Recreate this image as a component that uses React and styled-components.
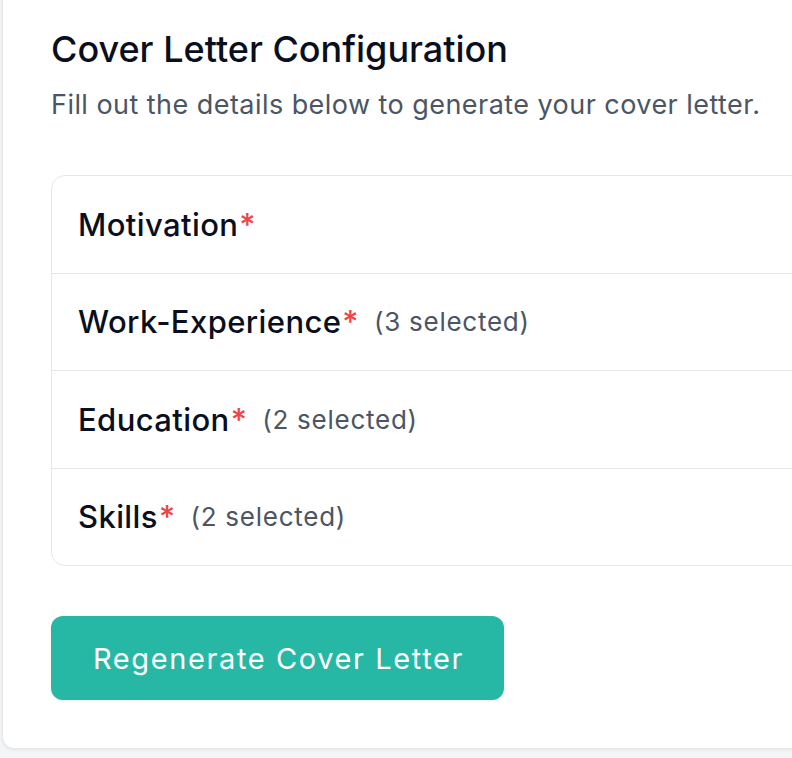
import styled, { createGlobalStyle } from "styled-components";

const GlobalStyle = createGlobalStyle`
  html, body {
    margin: 0;
    padding: 0;
    background: #f4f5f7;
    font-family: Inter, "Noto Sans", "Liberation Sans", sans-serif;
  }
`;

const Page = styled.div`
  width: 792px;
  height: 758px;
  overflow: hidden;
  padding-left: 2px;
  box-sizing: border-box;
`;

const Card = styled.section`
  margin-top: -20px;
  width: 900px;
  box-sizing: border-box;
  background: #ffffff;
  border: 1.5px solid #e5e7eb;
  border-radius: 12px;
  box-shadow: 0 1px 3px rgba(0, 0, 0, 0.07);
  padding: 48px 48px 48px 48px;
`;

const Title = styled.h2`
  margin: 0;
  font-size: 36px;
  line-height: 40px;
  font-weight: 500;
  letter-spacing: 0;
  color: #0a0f1e;
`;

const Subtitle = styled.p`
  margin: 20px 0 0;
  font-size: 27px;
  line-height: 32px;
  letter-spacing: 0.45px;
  color: #4b5563;
`;

const List = styled.div`
  margin-top: 54px;
  border: 1.5px solid #e5e7eb;
  border-radius: 14px;
  overflow: hidden;
`;

const Row = styled.div`
  display: flex;
  align-items: center;
  height: 96.5px;
  padding: 0 26px;
  & + & {
    border-top: 1.5px solid #e5e7eb;
  }
`;

const Label = styled.span`
  font-size: 31px;
  font-weight: 500;
  letter-spacing: 0.4px;
  color: #0a0f1e;
`;

const Star = styled.span`
  margin-left: 1px;
  color: #ef4444;
`;

const Count = styled.span`
  margin-left: 15px;
  font-size: 26px;
  letter-spacing: 0.75px;
  color: #4b5563;
`;

const Button = styled.button`
  margin-top: 50px;
  height: 84px;
  padding: 0 40px 0 42px;
  border: none;
  border-radius: 12px;
  background: #26b8a5;
  color: #ffffff;
  font-family: inherit;
  font-size: 29px;
  font-weight: 400;
  letter-spacing: 1.6px;
  box-shadow: 0 1px 3px rgba(0, 0, 0, 0.08);
  cursor: pointer;
`;

const sections = [
  { name: "Motivation", count: null },
  { name: "Work-Experience", count: 3 },
  { name: "Education", count: 2 },
  { name: "Skills", count: 2 },
];

export default function App() {
  return (
    <Page>
      <GlobalStyle />
      <Card>
        <Title>Cover Letter Configuration</Title>
        <Subtitle>Fill out the details below to generate your cover letter.</Subtitle>
        <List>
          {sections.map((s) => (
            <Row key={s.name}>
              <Label>
                {s.name}
                <Star>*</Star>
              </Label>
              {s.count !== null && <Count>({s.count} selected)</Count>}
            </Row>
          ))}
        </List>
        <Button type="button">Regenerate Cover Letter</Button>
      </Card>
    </Page>
  );
}
